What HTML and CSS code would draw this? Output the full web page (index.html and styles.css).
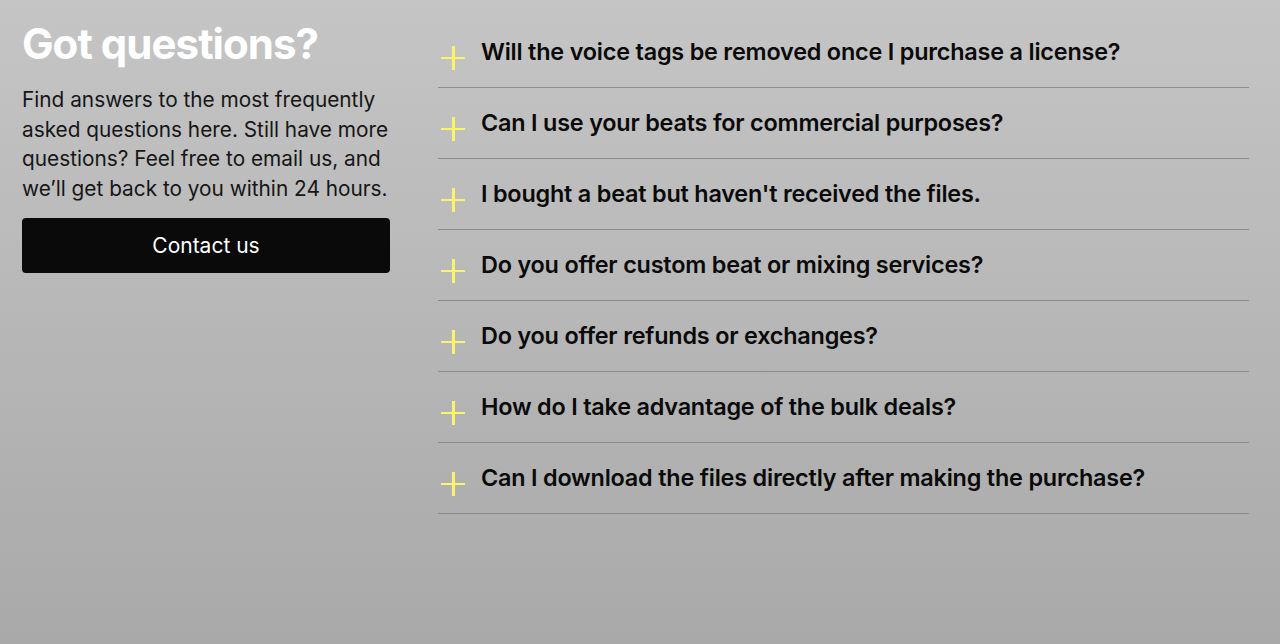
FILE: index.html
```html
<!DOCTYPE html>
<html lang="en">
<head>
<meta charset="utf-8">
<title>FAQ</title>
<link rel="stylesheet" href="styles.css">
</head>
<body>
<section class="faq">
  <div class="intro">
    <h1 class="title">Got questions?</h1>
    <p class="lead">Find answers to the most frequently asked questions here. Still have more questions? Feel free to email us, and we’ll get back to you within 24 hours.</p>
    <a class="btn" href="#">Contact us</a>
  </div>
  <ul class="list">
    <li class="item"><span class="plus"></span><span class="q">Will the voice tags be removed once I purchase a license?</span></li>
    <li class="item"><span class="plus"></span><span class="q">Can I use your beats for commercial purposes?</span></li>
    <li class="item"><span class="plus"></span><span class="q">I bought a beat but haven't received the files.</span></li>
    <li class="item"><span class="plus"></span><span class="q">Do you offer custom beat or mixing services?</span></li>
    <li class="item"><span class="plus"></span><span class="q">Do you offer refunds or exchanges?</span></li>
    <li class="item"><span class="plus"></span><span class="q">How do I take advantage of the bulk deals?</span></li>
    <li class="item"><span class="plus"></span><span class="q">Can I download the files directly after making the purchase?</span></li>
  </ul>
</section>
</body>
</html>
```

FILE: styles.css
```css
* { box-sizing: border-box; }
html, body { height: 100%; }
body {
  margin: 0;
  background: linear-gradient(180deg, #c5c5c5 0%, #a9a9a9 100%);
  font-family: Inter, "Noto Sans", sans-serif;
  color: #0a0a0a;
}
.faq {
  display: flex;
  gap: 48px;
  padding: 17px 31px 0 22px;
}
.intro {
  width: 368px;
  flex: none;
  padding-top: 2px;
}
.title {
  margin: 0;
  color: #fff;
  font-size: 42px;
  font-weight: 700;
  letter-spacing: -0.95px;
  line-height: 50px;
}
.lead {
  margin: 16px 0 0;
  font-size: 20.8px;
  line-height: 29.7px;
  color: #161616;
}
.btn {
  display: flex;
  align-items: center;
  justify-content: center;
  height: 55px;
  margin-top: 14px;
  background: #0a0a0a;
  border-radius: 4px;
  color: #fff;
  font-size: 21px;
  text-decoration: none;
}
.list {
  flex: 1;
  list-style: none;
  margin: 0;
  padding: 0;
}
.item {
  display: flex;
  align-items: center;
  height: 71px;
  border-bottom: 1px solid #8c8c8c;
  padding-left: 3px;
}
.plus {
  position: relative;
  width: 24px;
  height: 24px;
  flex: none;
  margin-top: 11px;
  margin-right: 16px;
}
.plus::before, .plus::after {
  content: "";
  position: absolute;
  background: #fbf36a;
}
.plus::before { left: 0; right: 0; top: 11px; height: 2.5px; }
.plus::after { top: 0; bottom: 0; left: 11px; width: 2.5px; }
.q {
  font-size: 23.4px;
  font-weight: 600;
  letter-spacing: -0.2px;
  color: #0a0a0a;
  margin-top: -1px;
}
```
